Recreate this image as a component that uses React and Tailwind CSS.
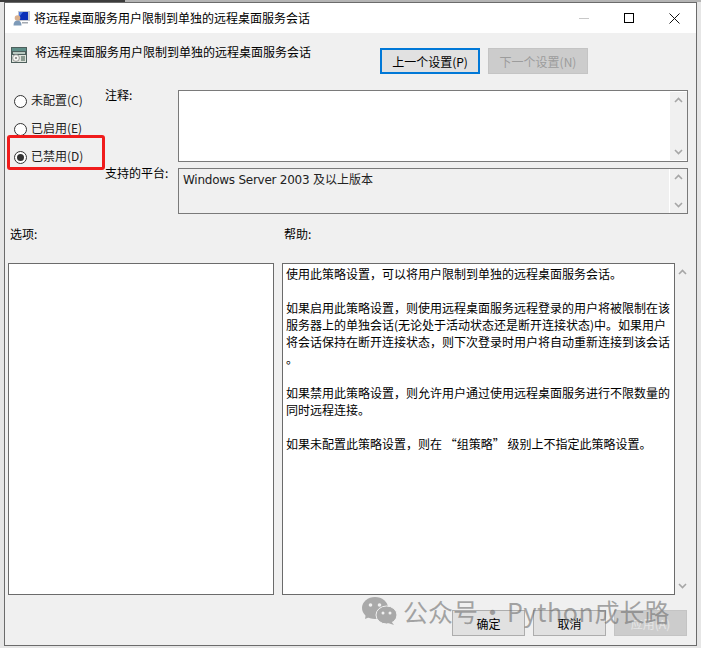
import React from "react";

const helpLines = [
  "使用此策略设置，可以将用户限制到单独的远程桌面服务会话。",
  "",
  "如果启用此策略设置，则使用远程桌面服务远程登录的用户将被限制在该",
  "服务器上的单独会话(无论处于活动状态还是断开连接状态)中。如果用户",
  "将会话保持在断开连接状态，则下次登录时用户将自动重新连接到该会话",
  "。",
  "",
  "如果禁用此策略设置，则允许用户通过使用远程桌面服务进行不限数量的",
  "同时远程连接。",
  "",
  "如果未配置此策略设置，则在 “组策略” 级别上不指定此策略设置。",
];

const Chevron = ({ up }) => (
  <svg width="9" height="6" viewBox="0 0 9 6" fill="none" stroke="#a6a6a6" strokeWidth="1.6">
    <path d={up ? "M1 5l3.5-3.5L8 5" : "M1 1l3.5 3.5L8 1"} />
  </svg>
);

const Scrollbar = ({ className }) => (
  <div className={`flex flex-col items-center justify-between ${className}`}>
    <Chevron up />
    <Chevron />
  </div>
);

const Radio = ({ label, checked }) => (
  <div className="flex h-[28px] items-center pl-[6px]">
    <span className="flex h-[13px] w-[13px] items-center justify-center rounded-full border border-[#333] bg-white">
      {checked && <span className="h-[7px] w-[7px] rounded-full bg-[#333]" />}
    </span>
    <span className="mb-[4px] ml-[4px] text-[#222]">{label}</span>
  </div>
);

const Button = ({ children, className }) => (
  <button className={`flex h-[26px] items-center justify-center ${className}`}>{children}</button>
);

const AppIcon = () => (
  <svg width="17" height="16" viewBox="0 0 17 16">
    <rect x="5" y="1" width="12" height="10" fill="#c4c8d0" />
    <rect x="6" y="2" width="9" height="8" fill="#0b2fb8" />
    <path d="M6 2h4L6 7z" fill="#4a78e4" />
    <circle cx="4.5" cy="8" r="2.8" fill="#d9b08e" />
    <path d="M0.5 15.5c0-3.4 1.5-5 4-5s4 1.6 4 5z" fill="#7d9ab8" />
    <rect x="9" y="12" width="6" height="1.5" fill="#a4aab2" />
  </svg>
);

const PolicyIcon = () => (
  <svg width="16" height="16" viewBox="0 0 16 16">
    <rect x="0" y="0" width="16" height="16" fill="#4d5f5c" />
    <rect x="1" y="1" width="14" height="3" fill="#5f8f88" />
    <rect x="2" y="5" width="12" height="2" fill="#b8c8c0" />
    <rect x="1" y="8" width="14" height="7" fill="#dfe3dc" />
    <circle cx="5" cy="11" r="3.4" fill="#f4f4f0" stroke="#777" strokeWidth="0.7" />
    <circle cx="5" cy="11" r="1" fill="#777" />
    <rect x="10" y="9" width="4" height="5" fill="#8a9a90" />
  </svg>
);

const WechatIcon = () => (
  <svg width="35" height="28" viewBox="0 0 35 28">
    <ellipse cx="13" cy="11" rx="13" ry="11" fill="#a9a9a9" />
    <path d="M4 16l-1 6 7-3z" fill="#a9a9a9" />
    <circle cx="8.5" cy="8" r="1.8" fill="#f0f0f0" />
    <circle cx="17.5" cy="8" r="1.8" fill="#f0f0f0" />
    <ellipse cx="24.5" cy="18" rx="10.5" ry="9" fill="#a9a9a9" stroke="#f0f0f0" strokeWidth="1" />
    <path d="M29 24l3 4-6-2z" fill="#a9a9a9" />
    <circle cx="21" cy="16" r="1.5" fill="#f0f0f0" />
    <circle cx="28" cy="16" r="1.5" fill="#f0f0f0" />
  </svg>
);

export default function App() {
  return (
    <div className="relative flex h-[648px] w-[701px] flex-col overflow-hidden bg-[#e6e6e6] font-['Noto_Sans_CJK_SC','Liberation_Sans',sans-serif] text-[12px] leading-[17px] text-black">
      {/* strip of the desktop behind the dialog */}
      <div className="flex h-[2px] bg-[#b4b4b4]">
        <div className="w-[125px] bg-[#3c3c3c]" />
      </div>

      <div className="ml-[4px] flex h-[644px] w-[693px] flex-col border border-[#6b6b6b] bg-[#f0f0f0]">
        {/* Title bar */}
        <div className="flex h-[30px] items-center bg-white pl-[8px]">
          <AppIcon />
          <span className="mb-[2px] ml-[4px] whitespace-nowrap">将远程桌面服务用户限制到单独的远程桌面服务会话</span>
          <div className="ml-auto flex h-full">
            <div className="flex w-[45px] items-center justify-center">
              <div className="h-px w-[10px] bg-[#c8c8c8]" />
            </div>
            <div className="flex w-[45px] items-center justify-center">
              <div className="h-[10px] w-[10px] border border-black" />
            </div>
            <div className="flex w-[45px] items-center justify-center">
              <svg className="ml-[2px]" width="11" height="11" viewBox="0 0 11 11" stroke="#111" strokeWidth="1" fill="none">
                <path d="M0.5 0.5l10 10M10.5 0.5l-10 10" />
              </svg>
            </div>
          </div>
        </div>

        {/* Body */}
        <div className="flex flex-1 flex-col pl-[3px] pr-[6px] pt-[10px]">
          {/* Heading and navigation */}
          <div className="flex h-[31px]">
            <div className="ml-[3px] mt-[4px]">
              <PolicyIcon />
            </div>
            <span className="ml-[8px] whitespace-nowrap">将远程桌面服务用户限制到单独的远程桌面服务会话</span>
            <div className="ml-auto mr-[102px] mt-[5px] flex gap-[8px]">
              <Button className="w-[100px] border-2 border-[#0078d7] bg-[#e1e1e1]">上一个设置(P)</Button>
              <Button className="w-[100px] border border-[#c4c4c4] bg-[#cccccc] text-[#9c9c9c]">下一个设置(N)</Button>
            </div>
          </div>

          {/* State, comment, platform */}
          <div className="mt-[13px] flex">
            <div className="w-[97px]">
              <Radio label="未配置(C)" />
              <Radio label="已启用(E)" />
              <Radio label="已禁用(D)" checked />
            </div>
            <div className="flex w-[73px] flex-col">
              <span className="-mt-px">注释:</span>
              <span className="mt-[61px]">支持的平台:</span>
            </div>
            <div className="flex w-[510px] flex-col pt-[3px]">
              <div className="flex h-[72px] border border-[#7a7a7a] bg-white">
                <div className="flex-1" />
                <Scrollbar className="my-px w-[17px] bg-[#f0f0f0] py-[5px]" />
              </div>
              <div className="mt-[6px] flex h-[46px] border border-[#7a7a7a] bg-[#f0f0f0]">
                <div className="flex-1 pl-[4px] pt-px text-[#222]">
                  <span className="font-['DejaVu_Sans',sans-serif] tracking-[-0.25px]">Windows Server 2003 </span>及以上版本
                </div>
                <Scrollbar className="w-[18px] border-l border-white py-[5px]" />
              </div>
            </div>
          </div>

          {/* Section labels */}
          <div className="mt-[11px] flex">
            <span className="w-[276px] pl-[2px]">选项:</span>
            <span>帮助:</span>
          </div>

          {/* Options and help */}
          <div className="mt-[21px] flex h-[332px]">
            <div className="w-[266px] border border-[#6b6b6b] bg-white" />
            <div className="ml-[8px] w-[393px] whitespace-nowrap border border-[#6b6b6b] bg-white pl-[3px] pt-px">
              {helpLines.map((line, i) => (
                <div key={i} className="h-[17px]">
                  {line}
                </div>
              ))}
            </div>
            <Scrollbar className="w-[15px] py-[6px]" />
          </div>

          {/* Footer */}
          <div className="mr-[3px] mt-[15px] flex justify-end gap-[8px]">
            <Button className="w-[73px] border border-[#adadad] bg-[#e1e1e1]">确定</Button>
            <Button className="w-[73px] border border-[#adadad] bg-[#e1e1e1]">取消</Button>
            <Button className="w-[73px] border border-[#c4c4c4] bg-[#cccccc] text-[#e6e6e6]">应用(A)</Button>
          </div>
        </div>
      </div>

      {/* Red annotation round the selected radio */}
      <div className="absolute left-[7px] top-[135px] h-[35px] w-[98px] rounded-[3px] border-[3px] border-[#f01c1c]" />

      {/* Watermark */}
      <div className="pointer-events-none absolute left-[362px] top-[596px] flex items-center text-[25px] leading-[30px] text-[#6e6e6e]/60">
        <WechatIcon />
        <span className="ml-[6px] whitespace-nowrap">公众号</span>
        <span className="w-[29px] text-center">·</span>
        <span className="whitespace-nowrap tracking-[0.6px]">Python</span>
        <span className="whitespace-nowrap">成长路</span>
      </div>
    </div>
  );
}
